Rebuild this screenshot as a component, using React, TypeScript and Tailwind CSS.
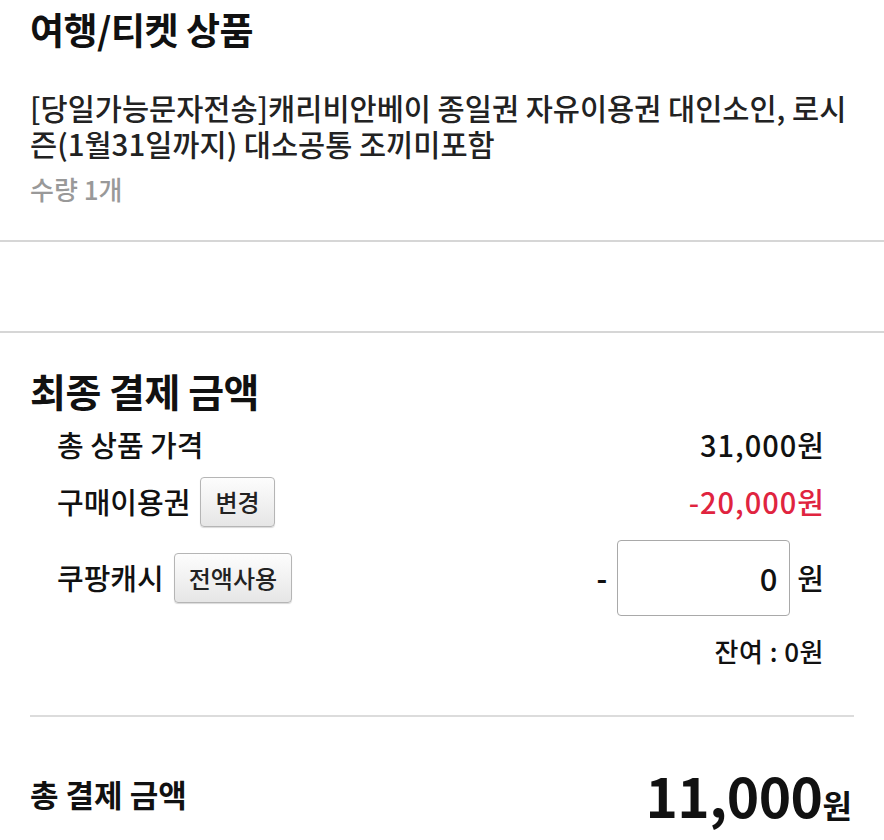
import React from "react";

const font = { fontFamily: '"Noto Sans CJK KR", "Noto Sans", sans-serif' };

function GrayButton({ label }: { label: string }) {
  return (
    <button className="h-[50px] rounded-[4px] border border-[#b5b5b5] bg-gradient-to-b from-[#fdfdfd] to-[#e6e6e6] px-[14px] text-[24px] font-medium leading-none text-[#222] shadow-[0_1px_1px_rgba(0,0,0,0.15)]">
      {label}
    </button>
  );
}

export default function App() {
  return (
    <div style={font} className="min-h-[840px] w-[884px] bg-white text-[#111]">
      {/* product card */}
      <section className="border-b-2 border-[#d6d6d6] px-[30px] pb-[36px] pt-[7px]">
        <h1 className="text-[37px] font-bold leading-[44px] tracking-[-0.5px]">여행/티켓 상품</h1>
        <p className="mt-[38px] text-[29.5px] font-medium leading-[36px] text-[#222]">
          [당일가능문자전송]캐리비안베이 종일권 자유이용권 대인소인, 로시즌(1월31일까지) 대소공통 조끼미포함
        </p>
        <p className="mt-[13px] text-[26px] font-medium leading-[30px] text-[#999]">수량 1개</p>
      </section>

      <div className="h-[89px]" />

      {/* payment card */}
      <section className="border-t-2 border-[#d6d6d6] px-[30px] pt-[34px]">
        <h2 className="text-[39px] font-bold leading-[46px] tracking-[-0.5px]">최종 결제 금액</h2>

        <div className="pl-[27px] pr-[30px] text-[29px] font-medium text-[#111]">
          <div className="mt-[14px] flex h-[36px] items-center justify-between">
            <span>총 상품 가격</span>
            <span className="-mr-[1px] tracking-[1px]">31,000원</span>
          </div>

          <div className="mt-[14px] flex h-[50px] items-center justify-between">
            <div className="flex items-center gap-[10px]">
              <span>구매이용권</span>
              <GrayButton label="변경" />
            </div>
            <span className="-mr-[1px] tracking-[1px] text-[#e0243f]">-20,000원</span>
          </div>

          <div className="mt-[13px] flex h-[76px] items-center justify-between">
            <div className="flex items-center gap-[10px]">
              <span>쿠팡캐시</span>
              <GrayButton label="전액사용" />
            </div>
            <div className="flex items-center">
              <span className="mr-[10px] font-bold">-</span>
              <div className="flex h-[76px] w-[173px] items-center justify-end rounded-[4px] border-[1.5px] border-[#a9a9a9] pr-[12px] text-[31px]">
                0
              </div>
              <span className="ml-[7px]">원</span>
            </div>
          </div>

          <div className="mt-[19px] flex h-[30px] items-center justify-end text-[26px] tracking-[0.5px]">잔여 : 0원</div>
        </div>

        <div className="mt-[50px] h-[2px] bg-[#dcdcdc]" />

        <div className="mt-[47px] flex h-[60px] items-center justify-between">
          <span className="text-[31px] font-bold">총 결제 금액</span>
          <span className="flex items-baseline pr-[2px] font-bold">
            <span className="text-[55px] leading-none tracking-[-0.5px]">11,000</span>
            <span className="text-[32px] leading-none">원</span>
          </span>
        </div>
      </section>
    </div>
  );
}
